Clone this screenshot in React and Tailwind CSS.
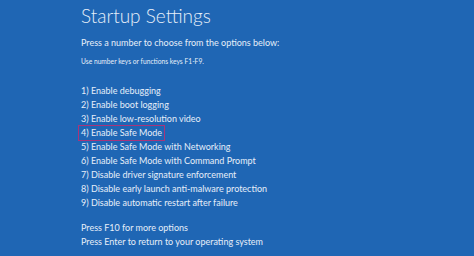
import React from "react";

const options = [
  "1) Enable debugging",
  "2) Enable boot logging",
  "3) Enable low-resolution video",
  "4) Enable Safe Mode",
  "5) Enable Safe Mode with Networking",
  "6) Enable Safe Mode with Command Prompt",
  "7) Disable driver signature enforcement",
  "8) Disable early launch anti-malware protection",
  "9) Disable automatic restart after failure",
];

export default function App() {
  return (
    <div
      className="w-[474px] h-[256px] bg-[#1f66b4] text-[#e6eef9] overflow-hidden pl-[81px] pt-[2px] flex flex-col"
      style={{ fontFamily: 'Lato, "Open Sans", sans-serif' }}
    >
      <div className="text-[19px] leading-[28px] font-light">Startup Settings</div>
      <div className="mt-[6px] text-[9px] leading-[14px]">
        Press a number to choose from the options below:
      </div>
      <div className="mt-[6px] text-[6.7px] leading-[10px]">
        Use number keys or functions keys F1-F9.
      </div>
      <div className="mt-[18px] flex flex-col text-[9px] leading-[14px]">
        {options.map((o, i) => (
          <div key={o}>
            {i === 3 ? (
              <span className="inline-block align-top border border-[#a8357a] -ml-[3px] pl-[2px] pr-[2px] -my-[1px]">
                {o}
              </span>
            ) : (
              o
            )}
          </div>
        ))}
      </div>
      <div className="mt-[11px] flex flex-col text-[9px] leading-[14px]">
        <div>Press F10 for more options</div>
        <div>Press Enter to return to your operating system</div>
      </div>
    </div>
  );
}
